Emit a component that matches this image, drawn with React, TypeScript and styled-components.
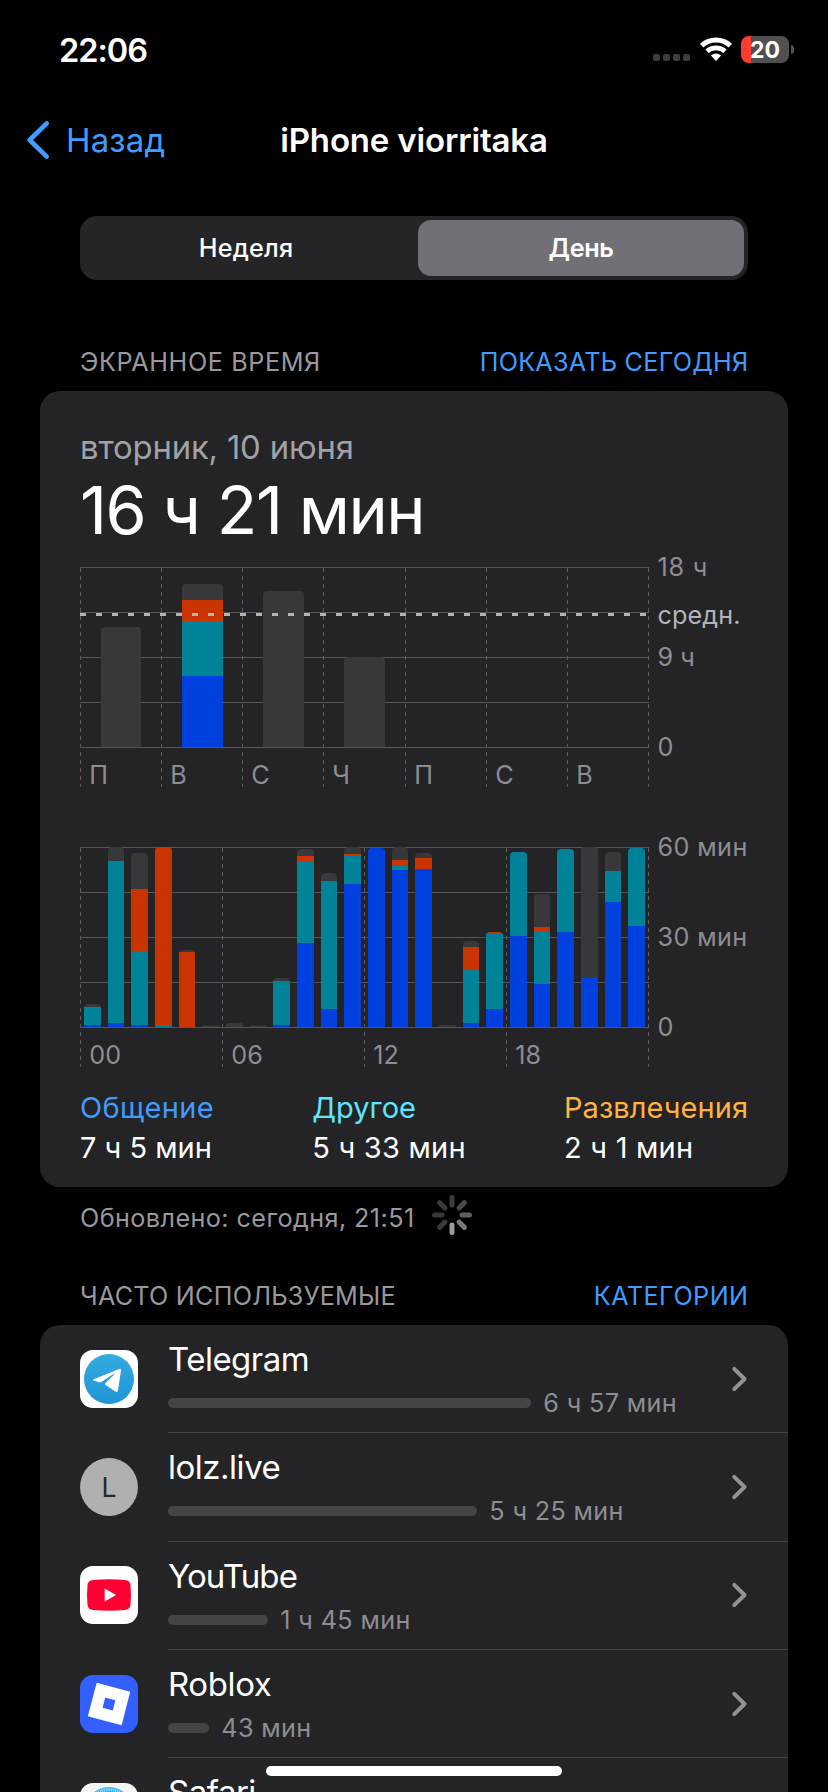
import React from "react";
import styled, { createGlobalStyle } from "styled-components";

const font = `Inter, "Noto Sans", "Liberation Sans", sans-serif`;
const c = {
  blue: "#409cff",
  cyan: "#5de6ff",
  orange: "#ffb340",
  card: "#242426",
  label: "#98989e",
  dim: "#8d8d92",
  grid: "#545457",
  barBlue: "#0040df",
  barTeal: "#008299",
  barRed: "#c93400",
  barGray: "#38383a",
};

const GlobalStyle = createGlobalStyle`
  * { box-sizing: border-box; }
  html, body { margin: 0; background: #000; }
  body { font-family: ${font}; color: #fff; overflow: hidden; }
`;

const Screen = styled.div`
  position: relative;
  width: 828px;
  height: 1792px;
  overflow: hidden;
  background: #000;
  display: flex;
  flex-direction: column;
  white-space: nowrap;
`;

/* ---------- status bar ---------- */

const StatusBar = styled.header`
  height: 100px;
  flex: none;
  display: flex;
  align-items: center;
  justify-content: space-between;
  padding: 0 34px 1px 59px;
`;

const Clock = styled.span`
  padding-top: 1px;
  font-size: 32.5px;
  font-weight: 600;
  letter-spacing: -1px;
`;

const StatusIcons = styled.div`
  display: flex;
  align-items: center;
`;

const SignalDots = styled.div`
  display: flex;
  gap: 3px;
  margin: 16px 10px 0 0;
`;

const Dot = styled.i`
  width: 7px;
  height: 7px;
  border-radius: 2px;
  background: #3d3d3e;
`;

const Battery = styled.div`
  display: flex;
  align-items: center;
  gap: 2px;
  margin-left: 9px;
`;

const BatteryShell = styled.div`
  width: 48px;
  height: 27px;
  border-radius: 8px;
  background: linear-gradient(90deg, #ff3b30 0 10.3px, #505051 10.3px);
  display: flex;
  align-items: center;
  justify-content: center;
  padding-top: 1px;
  font-size: 23px;
  font-weight: 700;
  line-height: 27px;
`;

const BatteryTip = styled.i`
  width: 3px;
  height: 9px;
  border-radius: 0 4px 4px 0;
  background: #505051;
`;

/* ---------- navigation ---------- */

const NavBar = styled.nav`
  height: 80px;
  flex: none;
  display: grid;
  grid-template-columns: 1fr auto 1fr;
  align-items: center;
`;

const BackLink = styled.a`
  display: flex;
  align-items: center;
  gap: 16px;
  padding-left: 26px;
  color: ${c.blue};
  font-size: 33px;
  letter-spacing: 0.15px;
`;

const NavTitle = styled.h1`
  margin: 0;
  font-size: 33px;
  font-weight: 600;
  letter-spacing: -0.17px;
`;

const Segmented = styled.div`
  flex: none;
  height: 64px;
  margin: 36px 80px 0;
  padding: 4px;
  border-radius: 17px;
  background: #252528;
  display: grid;
  grid-template-columns: 1fr 1fr;
  gap: 8px;
`;

const Segment = styled.div<{ $active?: boolean }>`
  display: flex;
  align-items: center;
  justify-content: center;
  border-radius: 13px;
  font-size: 25.2px;
  padding-right: ${(p) => (p.$active ? 0 : 2)}px;
  padding-bottom: 1px;
  font-weight: ${(p) => (p.$active ? 600 : 480)};
  letter-spacing: ${(p) => (p.$active ? -0.35 : 0.2)}px;
  background: ${(p) => (p.$active ? "#717077" : "transparent")};
`;

/* ---------- sections ---------- */

const SectionHeader = styled.div<{ $top: number }>`
  flex: none;
  display: flex;
  justify-content: space-between;
  margin: ${(p) => p.$top}px 79.5px 9px 80px;
  line-height: 40px;
  font-size: 25.2px;
`;

const SectionTitle = styled.span<{ $spacing: number }>`
  color: ${c.label};
  letter-spacing: ${(p) => p.$spacing}px;
`;

const SectionAction = styled(SectionTitle)`
  color: ${c.blue};
`;

const Card = styled.section`
  flex: none;
  margin: 0 40px;
  border-radius: 20px;
  background: ${c.card};
`;

const UsageCard = styled(Card)`
  height: 796px;
  padding: 36px 40px 0;
  display: flex;
  flex-direction: column;
`;

const DateLine = styled.div`
  line-height: 40px;
  margin-bottom: 6px;
  font-size: 32.8px;
  letter-spacing: -0.15px;
  color: #a1a1a8;
`;

const Total = styled.div`
  height: 74px;
  line-height: 75px;
  font-size: 66.5px;
  letter-spacing: -1.46px;
`;

const ChartSvg = styled.svg`
  display: block;
  flex: none;
  overflow: visible;
  font-size: 25.2px;
`;

const ChartGap = styled.div`
  height: 40px;
  flex: none;
`;

const Legend = styled.div`
  display: flex;
  justify-content: space-between;
  margin-top: 21px;
`;

const LegendItem = styled.div`
  display: flex;
  flex-direction: column;
  font-size: 29px;
  line-height: 40px;
`;

const LegendName = styled.span<{ $color: string; $spacing: number }>`
  color: ${(p) => p.$color};
  letter-spacing: ${(p) => p.$spacing}px;
`;

const LegendValue = styled.span<{ $spacing: number }>`
  letter-spacing: ${(p) => p.$spacing}px;
`;

const Updated = styled.div`
  flex: none;
  display: flex;
  align-items: center;
  gap: 17px;
  height: 46px;
  margin: 8px 80px 0;
  font-size: 25.2px;
  letter-spacing: 0.42px;
  color: ${c.label};

  svg {
    margin-bottom: 6px;
  }
`;

/* ---------- app list ---------- */

const AppCard = styled(Card)`
  display: flex;
  flex-direction: column;
`;

const AppRow = styled.div`
  display: flex;
  align-items: flex-start;
  height: 108.3px;
  padding-left: 40px;
`;

const AppIcon = styled.div`
  width: 58px;
  height: 58px;
  margin: 24.8px 30px 0 0;
`;

const LetterIcon = styled.div`
  width: 58px;
  height: 58px;
  border-radius: 50%;
  display: flex;
  align-items: center;
  justify-content: center;
  background: #b0b0b0;
  color: #272727;
  font-size: 26.5px;
`;

const AppBody = styled.div`
  flex: 1;
  height: 100%;
  display: flex;
  align-items: center;
  justify-content: space-between;
  padding-right: 40px;
  border-bottom: 1px solid #444447;
`;

const AppInfo = styled.div`
  align-self: flex-start;
  padding-top: 12px;
`;

const AppName = styled.div<{ $spacing: number }>`
  font-size: 33px;
  line-height: 44px;
  letter-spacing: ${(p) => p.$spacing}px;
`;

const UsageLine = styled.div`
  display: flex;
  align-items: center;
  gap: 12.3px;
  line-height: 44px;
  font-size: 25.2px;
  letter-spacing: 0.36px;
  color: ${c.dim};
`;

const UsageBar = styled.i<{ $width: number }>`
  width: ${(p) => p.$width}px;
  height: 10px;
  border-radius: 5px;
  background: #454547;
`;

const HomeIndicator = styled.div`
  position: absolute;
  left: 266px;
  bottom: 16px;
  width: 296px;
  height: 10px;
  border-radius: 5px;
  background: #fff;
`;

/* ---------- charts ---------- */

type Kind = "gray" | "red" | "teal" | "blue";
/* A segment reaches from its height above the baseline down to the next one. */
type Seg = [Kind, number];

const fills: Record<Kind, string> = {
  gray: c.barGray,
  red: c.barRed,
  teal: c.barTeal,
  blue: c.barBlue,
};

const TOP = 20;
const H = 180;
const BASE = TOP + H;
const W = 568;

function Bar({ x, w, segs }: { x: number; w: number; segs: Seg[] }) {
  const top = BASE - segs[0][1];
  const r = Math.min(4, segs[0][1] / 2);
  return (
    <g>
      <path
        d={`M${x} ${BASE}V${top + r}q0 ${-r} ${r} ${-r}H${x + w - r}q${r} 0 ${r} ${r}V${BASE}Z`}
        fill={fills[segs[0][0]]}
      />
      {segs.slice(1).map(([kind, h], i) => (
        <rect key={i} x={x} y={BASE - h} width={w} height={h} fill={fills[kind]} />
      ))}
    </g>
  );
}

interface ChartProps {
  columns: number[];
  columnLabels: string[];
  axis: { text: string; y: number; spacing?: number; bright?: boolean }[];
  bars: { x: number; w: number; segs: Seg[] }[];
  average?: number;
}

function Chart({ columns, columnLabels, axis, bars, average }: ChartProps) {
  return (
    <ChartSvg width={668} height={240} viewBox="0 0 668 240">
      {[0, 45, 90, 135].map((y) => (
        <rect key={y} x={0} y={TOP + y} width={W + 1} height={1} fill={c.grid} />
      ))}
      {columns.map((x) => (
        <path key={x} d={`M${x + 0.5} ${TOP + 1}V240`} stroke="#5c5c5f" strokeDasharray="4 4" />
      ))}
      {bars.map((b, i) => (
        <Bar key={i} {...b} />
      ))}
      <rect x={0} y={BASE} width={W + 1} height={1} fill={c.grid} />
      {average !== undefined && (
        <path d={`M0 ${average}H${W}`} stroke="#b4b4b8" strokeWidth={3} strokeDasharray="6 10" />
      )}
      {columnLabels.map((t, i) => (
        <text key={i} x={columns[i] + 9.3} y={236.7} fill={c.dim}>
          {t}
        </text>
      ))}
      {axis.map((a) => (
        <text
          key={a.text}
          x={577.5}
          y={a.y}
          fill={a.bright ? "#b4b4b8" : c.dim}
          letterSpacing={a.spacing ?? 0}
        >
          {a.text}
        </text>
      ))}
    </ChartSvg>
  );
}

const weekBars: ChartProps["bars"] = [
  { x: 21, w: 40, segs: [["gray", 120]] },
  { x: 102, w: 41, segs: [["gray", 163], ["red", 147], ["teal", 126], ["blue", 71]] },
  { x: 183, w: 41, segs: [["gray", 156]] },
  { x: 264, w: 41, segs: [["gray", 90]] },
];

const hours: Seg[][] = [
  [["gray", 23], ["teal", 20], ["blue", 2]],
  [["gray", 180], ["teal", 166], ["blue", 4]],
  [["gray", 174], ["red", 138], ["teal", 75], ["blue", 2]],
  [["red", 180], ["teal", 2]],
  [["gray", 77], ["red", 75]],
  [["gray", 1.5]],
  [["gray", 4]],
  [["gray", 1.5]],
  [["gray", 49], ["teal", 46], ["blue", 2]],
  [["gray", 178], ["red", 171], ["teal", 165], ["blue", 84]],
  [["gray", 154], ["teal", 146], ["blue", 18]],
  [["gray", 180], ["red", 173], ["teal", 172], ["blue", 143]],
  [["blue", 179]],
  [["gray", 180], ["red", 167], ["teal", 162], ["blue", 157]],
  [["gray", 174], ["red", 169], ["blue", 158]],
  [["gray", 2]],
  [["gray", 86], ["red", 80], ["teal", 57], ["blue", 4]],
  [["red", 95], ["teal", 93], ["blue", 18]],
  [["teal", 175], ["blue", 91]],
  [["gray", 133], ["red", 100], ["teal", 96], ["blue", 43]],
  [["teal", 178], ["blue", 95]],
  [["gray", 180], ["blue", 49]],
  [["gray", 175], ["teal", 156], ["blue", 125]],
  [["teal", 179], ["blue", 101]],
];

const hourBars = hours.map((segs, i) => {
  const x = Math.round(3.9 + (568 / 24) * i);
  return { x, w: Math.round(20.6 + (568 / 24) * i) - x, segs };
});

/* ---------- drawings ---------- */

const arc = (r: number) => {
  const dx = r * Math.sin(0.75);
  const dy = r * Math.cos(0.75);
  return `M${16 - dx} ${24 - dy}A${r} ${r} 0 0 1 ${16 + dx} ${24 - dy}`;
};

const Wifi = () => (
  <svg width="32" height="25" viewBox="0 0 32 25" fill="none" stroke="#fff" strokeWidth="5">
    <path d={arc(21)} />
    <path d={arc(13.2)} strokeWidth="4.8" />
    <path d={`${arc(7.4)}L16 24Z`} fill="#fff" stroke="none" />
  </svg>
);

const BackChevron = () => (
  <svg width="24" height="40" viewBox="0 0 24 40" fill="none">
    <path
      d="M20.7 3.3L3.6 20L20.7 36.7"
      stroke={c.blue}
      strokeWidth="4.6"
      strokeLinecap="round"
      strokeLinejoin="round"
    />
  </svg>
);

const Disclosure = () => (
  <svg width="18" height="28" viewBox="0 0 18 28" fill="none">
    <path
      d="M4.2 3.8L14.6 14L4.2 24.2"
      stroke="#929297"
      strokeWidth="3.9"
      strokeLinecap="round"
      strokeLinejoin="round"
    />
  </svg>
);

const spokes = ["#3d3d3f", "#4b4b4d", "#5e5e60", "#79797b", "#9b9b9d", "#3a3a3c", "#373739", "#39393b"];

const Spinner = () => (
  <svg width="40" height="40" viewBox="-20 -20 40 40">
    {spokes.map((color, i) => (
      <rect
        key={i}
        x="-2.5"
        y="-20"
        width="5"
        height="12.5"
        rx="2.5"
        fill={color}
        transform={`rotate(${i * 45})`}
      />
    ))}
  </svg>
);

const TelegramIcon = () => (
  <svg width="58" height="58" viewBox="0 0 58 58">
    <defs>
      <linearGradient id="tg" x1="0" y1="0" x2="0" y2="1">
        <stop offset="0" stopColor="#35aadf" />
        <stop offset="1" stopColor="#1e95d6" />
      </linearGradient>
    </defs>
    <rect width="58" height="58" rx="13" fill="#fff" />
    <circle cx="29" cy="29" r="25" fill="url(#tg)" />
    <path
      d="M13.6 29.2L39.2 18.9Q41.3 18.2 41 20.6L38 40.3Q37.5 42.8 35.4 41.5L25.2 34.7Q24.4 34 25.2 33.2L34.4 24.2Q34.8 23.4 33.8 23.8L21.4 32.1Q20.4 32.6 19.2 32.3L13.8 30.7Q12.4 30 13.6 29.2Z"
      fill="#fff"
    />
  </svg>
);

const YouTubeIcon = () => (
  <svg width="58" height="58" viewBox="0 0 58 58">
    <rect width="58" height="58" rx="13" fill="#fff" />
    <path
      d="M13 14Q29 12.6 45 14Q50 14.4 50.5 19Q51.5 29 50.5 39Q50 43.6 45 44Q29 45.4 13 44Q8 43.6 7.5 39Q6.5 29 7.5 19Q8 14.4 13 14Z"
      fill="#ff0033"
    />
    <path d="M24.7 22.6L36.2 29L24.7 35.6Z" fill="#fff" />
  </svg>
);

const RobloxIcon = () => (
  <svg width="58" height="58" viewBox="0 0 58 58">
    <rect width="58" height="58" rx="13" fill="#335fff" />
    <path
      fillRule="evenodd"
      d="M16.7 7.8L50.2 16.7L41.6 50.2L7.8 41.2ZM25.2 22.6L35.4 25.3L32.8 35.5L22.6 32.8Z"
      fill="#fff"
    />
  </svg>
);

const SafariIcon = () => (
  <svg width="58" height="58" viewBox="0 0 58 58">
    <rect width="58" height="58" rx="13" fill="#f4f4f5" />
    <circle cx="29" cy="29" r="25" fill="#35b4ee" />
    <circle
      cx="29"
      cy="29"
      r="22.5"
      fill="none"
      stroke="#fff"
      strokeOpacity="0.65"
      strokeWidth="3"
      strokeDasharray="0.8 1.16"
    />
    <path d="M46 12L32 32L26 26Z" fill="#ff3b30" />
    <path d="M12 46L26 26L32 32Z" fill="#fff" />
  </svg>
);

const apps = [
  { name: "Telegram", spacing: -0.52, icon: <TelegramIcon />, width: 363, time: "6 ч 57 мин" },
  { name: "lolz.live", spacing: -0.48, icon: <LetterIcon>L</LetterIcon>, width: 309, time: "5 ч 25 мин" },
  { name: "YouTube", spacing: -0.9, icon: <YouTubeIcon />, width: 100, time: "1 ч 45 мин" },
  { name: "Roblox", spacing: -0.4, icon: <RobloxIcon />, width: 41, time: "43 мин" },
  { name: "Safari", spacing: -0.5, icon: <SafariIcon />, width: 0, time: "" },
];

const legend = [
  { name: "Общение", color: c.blue, spacing: 0.37, value: "7 ч 5 мин", valueSpacing: 0 },
  { name: "Другое", color: c.cyan, spacing: 0, value: "5 ч 33 мин", valueSpacing: 0.22 },
  { name: "Развлечения", color: c.orange, spacing: 0.05, value: "2 ч 1 мин", valueSpacing: 0.22 },
];

export default function App() {
  return (
    <Screen>
      <GlobalStyle />
      <StatusBar>
        <Clock>22:06</Clock>
        <StatusIcons>
          <SignalDots>
            <Dot />
            <Dot />
            <Dot />
            <Dot />
          </SignalDots>
          <Wifi />
          <Battery>
            <BatteryShell>20</BatteryShell>
            <BatteryTip />
          </Battery>
        </StatusIcons>
      </StatusBar>

      <NavBar>
        <BackLink>
          <BackChevron />
          Назад
        </BackLink>
        <NavTitle>iPhone viorritaka</NavTitle>
      </NavBar>

      <Segmented>
        <Segment>Неделя</Segment>
        <Segment $active>День</Segment>
      </Segmented>

      <SectionHeader $top={62}>
        <SectionTitle $spacing={0.59}>ЭКРАННОЕ ВРЕМЯ</SectionTitle>
        <SectionAction $spacing={0.24}>ПОКАЗАТЬ СЕГОДНЯ</SectionAction>
      </SectionHeader>

      <UsageCard>
        <DateLine>вторник, 10 июня</DateLine>
        <Total>16 ч 21 мин</Total>
        <Chart
          columns={[0, 81, 162, 243, 325, 406, 487, 568]}
          columnLabels={["П", "В", "С", "Ч", "П", "С", "В"]}
          axis={[
            { text: "18 ч", y: 29, spacing: 0.8 },
            { text: "средн.", y: 77, spacing: 0.1, bright: true },
            { text: "9 ч", y: 118.7 },
            { text: "0", y: 208.7 },
          ]}
          bars={weekBars}
          average={67.5}
        />
        <ChartGap />
        <Chart
          columns={[0, 142, 284, 426, 568]}
          columnLabels={["00", "06", "12", "18"]}
          axis={[
            { text: "60 мин", y: 29, spacing: 0.4 },
            { text: "30 мин", y: 119, spacing: 0.4 },
            { text: "0", y: 208.7 },
          ]}
          bars={hourBars}
        />
        <Legend>
          {legend.map((l) => (
            <LegendItem key={l.name}>
              <LegendName $color={l.color} $spacing={l.spacing}>
                {l.name}
              </LegendName>
              <LegendValue $spacing={l.valueSpacing}>{l.value}</LegendValue>
            </LegendItem>
          ))}
        </Legend>
      </UsageCard>

      <Updated>
        Обновлено: сегодня, 21:51
        <Spinner />
      </Updated>

      <SectionHeader $top={35}>
        <SectionTitle $spacing={0.24}>ЧАСТО ИСПОЛЬЗУЕМЫЕ</SectionTitle>
        <SectionAction $spacing={0.45}>КАТЕГОРИИ</SectionAction>
      </SectionHeader>

      <AppCard>
        {apps.map((a) => (
          <AppRow key={a.name}>
            <AppIcon>{a.icon}</AppIcon>
            <AppBody>
              <AppInfo>
                <AppName $spacing={a.spacing}>{a.name}</AppName>
                {a.time && (
                  <UsageLine>
                    <UsageBar $width={a.width} />
                    {a.time}
                  </UsageLine>
                )}
              </AppInfo>
              <Disclosure />
            </AppBody>
          </AppRow>
        ))}
      </AppCard>

      <HomeIndicator />
    </Screen>
  );
}
